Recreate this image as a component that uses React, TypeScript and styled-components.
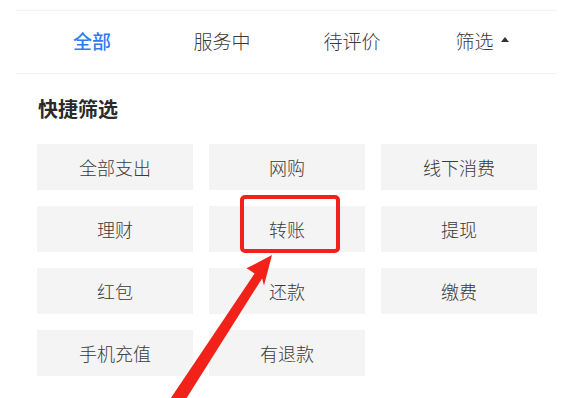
import styled, { createGlobalStyle } from 'styled-components';

const GlobalStyle = createGlobalStyle`
  html, body {
    margin: 0;
    padding: 0;
    background: #ffffff;
  }
  body {
    font-family: "Noto Sans CJK SC", "Noto Sans", sans-serif;
    color: #333333;
    overflow: hidden;
  }
`;

const tabs = ['全部', '服务中', '待评价'];

const quickFilters = [
  '全部支出',
  '网购',
  '线下消费',
  '理财',
  '转账',
  '提现',
  '红包',
  '还款',
  '缴费',
  '手机充值',
  '有退款',
];

const StyledPage = styled.div`
  position: relative;
  width: 563px;
  height: 398px;
  overflow: hidden;
  padding-top: 10px;
  box-sizing: border-box;
`;

const TabBar = styled.div`
  display: grid;
  grid-template-columns: repeat(4, 1fr);
  height: 62px;
  margin: 0 6px 0 16px;
  padding: 0 10px 0 11px;
  border-top: 1px solid #f3f3f3;
  border-bottom: 1px solid #f3f3f3;
  box-sizing: content-box;
`;

const Tab = styled.div<{ $active?: boolean }>`
  display: flex;
  align-items: center;
  justify-content: center;
  gap: 7px;
  font-size: 19px;
  font-weight: ${(p) => (p.$active ? 500 : 300)};
  color: ${(p) => (p.$active ? '#2f7bf5' : '#3a3a3a')};
  padding-bottom: 3px;
`;

const Caret = styled.span`
  width: 0;
  height: 0;
  border-left: 4px solid transparent;
  border-right: 4px solid transparent;
  border-bottom: 5px solid #333333;
  margin-top: -2px;
`;

const Section = styled.div`
  padding: 0 25px 0 37px;
`;

const Heading = styled.h3`
  margin: 21px 0 21px 1px;
  font-size: 20px;
  line-height: 28px;
  font-weight: 700;
  color: #2a2a2a;
`;

const FilterGrid = styled.div`
  display: grid;
  grid-template-columns: repeat(3, 156px);
  grid-auto-rows: 46px;
  gap: 16px;
`;

const FilterCell = styled.div`
  display: flex;
  align-items: center;
  justify-content: center;
  background: #f4f4f4;
  font-size: 18px;
  font-weight: 300;
  color: #3a3a3a;
`;

const Annotation = styled.svg`
  position: absolute;
  left: 0;
  top: 0;
  pointer-events: none;
`;

// arrow points, computed along its direction
function arrowPoints() {
  const tip = { x: 272, y: 255 };
  const u = { x: 0.546, y: -0.838 };
  const n = { x: 0.838, y: 0.546 };
  const at = (a: number, b: number) =>
    `${(tip.x + a * u.x + b * n.x).toFixed(1)},${(tip.y + a * u.y + b * n.y).toFixed(1)}`;
  return [
    at(0, 0),
    at(-30, 10),
    at(-25, 4.5),
    at(-200, 7),
    at(-200, -7),
    at(-25, -4.5),
    at(-25, -14),
  ].join(' ');
}

function App() {
  return (
    <StyledPage>
      <GlobalStyle />
      <TabBar>
        {tabs.map((t, i) => (
          <Tab key={t} $active={i === 0}>
            {t}
          </Tab>
        ))}
        <Tab>
          筛选
          <Caret />
        </Tab>
      </TabBar>
      <Section>
        <Heading>快捷筛选</Heading>
        <FilterGrid>
          {quickFilters.map((f) => (
            <FilterCell key={f}>{f}</FilterCell>
          ))}
        </FilterGrid>
      </Section>
      <Annotation width="563" height="398" viewBox="0 0 563 398">
        <rect
          x="242"
          y="197"
          width="96"
          height="54"
          rx="3"
          fill="none"
          stroke="#f2221b"
          strokeWidth="4"
        />
        <polygon points={arrowPoints()} fill="#f2221b" />
      </Annotation>
    </StyledPage>
  );
}

export default App;
